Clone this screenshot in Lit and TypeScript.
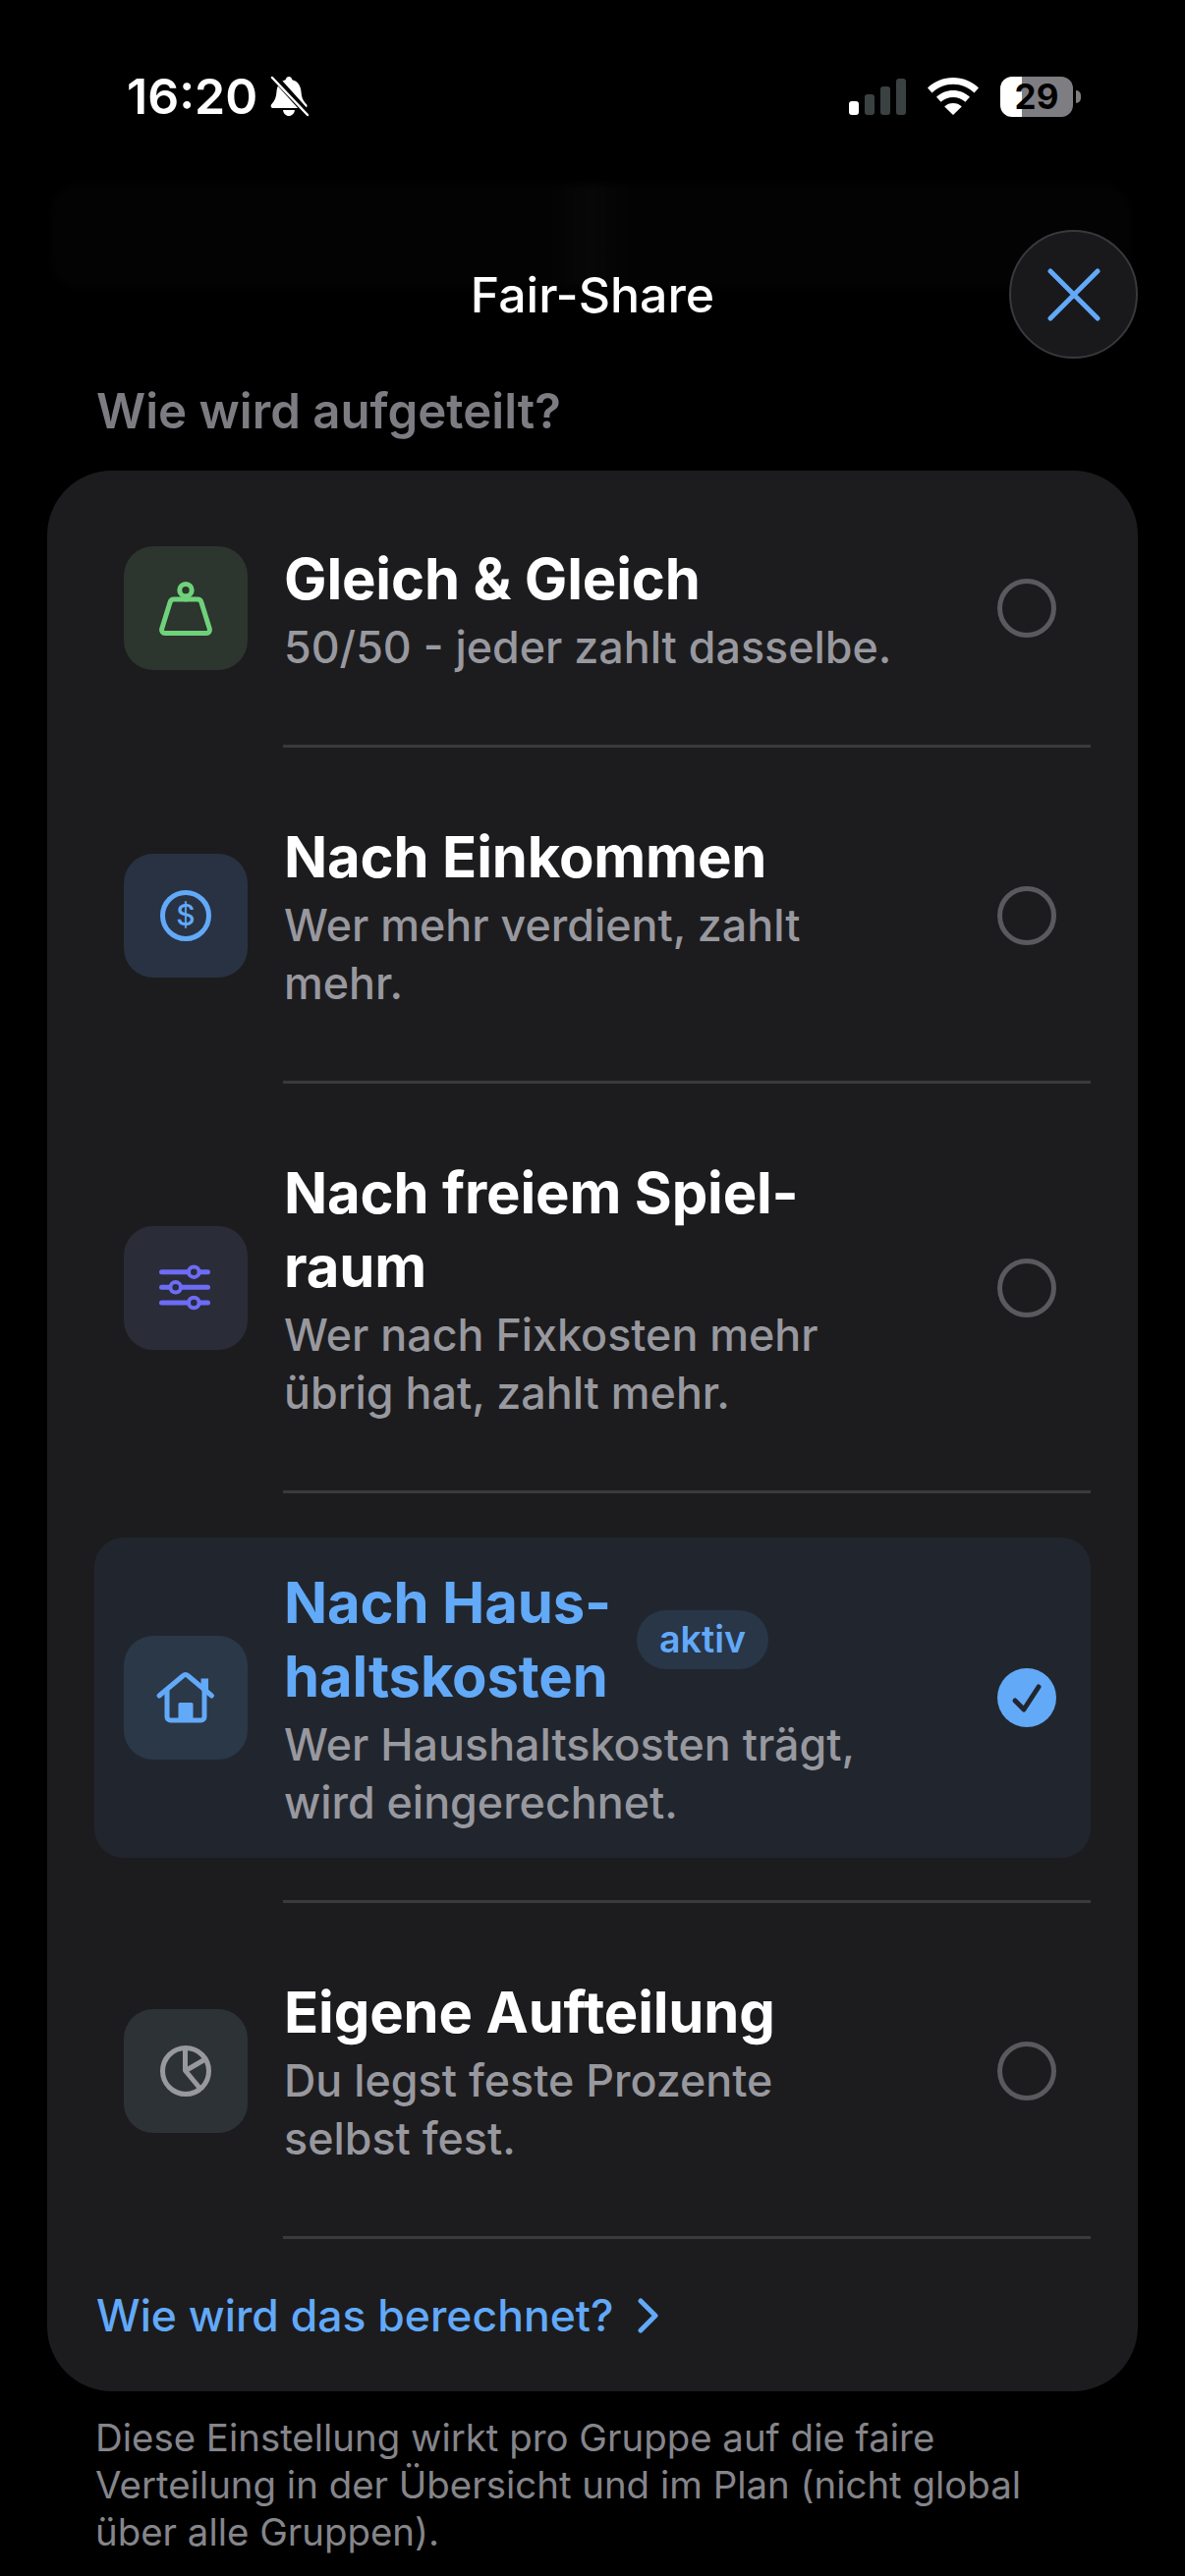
import { LitElement, html, svg, css, nothing } from 'lit';
import { customElement } from 'lit/decorators.js';
import { classMap } from 'lit/directives/class-map.js';

const weightIcon = svg`
  <circle cx="63" cy="44.7" r="6.2" />
  <path d="M63 51v3" />
  <path d="M51 54h24a4 4 0 0 1 3.900 3l8.400 27a3.500 3.500 0 0 1-3.400 4.600H42.100a3.500 3.500 0 0 1-3.400-4.600l8.400-27a4 4 0 0 1 3.900-3z" />
`;

const dollarIcon = svg`
  <circle cx="63" cy="63" r="23.5" />
  <text x="63" y="73" text-anchor="middle" class="glyph">$</text>
`;

const slidersIcon = svg`
  <path d="M38.500 46.700h47M38.500 62.300h47M38.500 78h47" />
  <circle class="knob" cx="71.300" cy="46.700" r="5.300" />
  <circle class="knob" cx="52.700" cy="62.300" r="5.300" />
  <circle class="knob" cx="71.300" cy="78" r="5.300" />
`;

const houseIcon = svg`
  <path d="M36 61 60.500 40.500a3.400 3.400 0 0 1 4.600 0L89.500 61" />
  <path d="M44 56v26.500a3.500 3.500 0 0 0 3.500 3.500h31a3.500 3.500 0 0 0 3.500-3.500V56" />
  <path d="M82.300 43.500V55" stroke-width="7.500" stroke-linecap="butt" />
  <path class="solid" d="M57 68h12a1.500 1.500 0 0 1 1.500 1.500V87h-15V69.500a1.500 1.500 0 0 1 1.500-1.500z" />
`;

const pieIcon = svg`
  <circle cx="63" cy="63" r="23.5" />
  <path d="M62.500 41v21.500L77 80M64 62l18-10.500" stroke-linecap="butt" />
`;

interface Plan {
  title: string;
  sub: string;
  tone: string;
  icon: unknown;
  active?: boolean;
}

const plans: Plan[] = [
  { title: 'Gleich & Gleich', sub: '50/50 - jeder zahlt dasselbe.', tone: 'green', icon: weightIcon },
  { title: 'Nach Einkommen', sub: 'Wer mehr verdient, zahlt\nmehr.', tone: 'blue', icon: dollarIcon },
  { title: 'Nach freiem Spiel-\nraum', sub: 'Wer nach Fixkosten mehr\nübrig hat, zahlt mehr.', tone: 'purple', icon: slidersIcon },
  { title: 'Nach Haus-\nhaltskosten', sub: 'Wer Haushaltskosten trägt,\nwird eingerechnet.', tone: 'home', icon: houseIcon, active: true },
  { title: 'Eigene Aufteilung', sub: 'Du legst feste Prozente\nselbst fest.', tone: 'gray', icon: pieIcon },
];

@customElement('app-root')
export class AppRoot extends LitElement {
  static styles = css`
    :host {
      display: block;
      position: relative;
      width: 1206px;
      height: 2622px;
      overflow: hidden;
      background: #000;
      color: #fff;
      font-family: Inter, 'Liberation Sans', sans-serif;
    }

    /* blurred content behind the sheet, barely visible */
    .ghost {
      position: absolute;
      left: 52px;
      top: 187px;
      width: 1098px;
      height: 106px;
      border-radius: 30px;
      background: linear-gradient(90deg, #030303 0 46%, #070707 50%, #030303 54%);
      filter: blur(3px);
    }

    /* ===== Status bar ===== */
    .status {
      position: relative;
      box-sizing: border-box;
      height: 234px;
      padding: 71px 114px 0 129px;
      display: flex;
      justify-content: space-between;
      align-items: flex-start;
    }
    .status-left,
    .status-right {
      display: flex;
      align-items: center;
      height: 54px;
    }
    .status-left { gap: 12px; }
    .time {
      font-size: 50px;
      font-weight: 600;
      line-height: 54px;
    }
    .bell { width: 40px; height: 42px; }
    .signal { width: 58px; height: 37px; margin-right: 22px; }
    .wifi { width: 52px; height: 38px; margin-right: 22px; }
    .battery {
      position: relative;
      width: 74px;
      height: 41px;
      border-radius: 12px;
      background: linear-gradient(90deg, #fff 0 22px, #7e7e82 22px);
      color: #000;
      font-size: 35px;
      font-weight: 700;
      line-height: 41px;
      text-align: center;
    }
    .battery::after {
      content: '';
      position: absolute;
      left: 77px;
      top: 14px;
      width: 5px;
      height: 13px;
      border-radius: 0 6px 6px 0;
      background: #7e7e82;
    }

    /* ===== Header ===== */
    .header {
      position: relative;
      display: grid;
      grid-template-columns: 131px 1fr 131px;
      align-items: center;
      padding: 0 48px;
    }
    .title {
      grid-column: 2;
      text-align: center;
      font-size: 50px;
      font-weight: 500;
    }
    .close {
      grid-column: 3;
      box-sizing: border-box;
      width: 131px;
      height: 131px;
      border-radius: 50%;
      background: #19191b;
      border: 2px solid #38393c;
      display: flex;
      align-items: center;
      justify-content: center;
    }
    .close svg { width: 54px; height: 54px; }

    .section {
      margin: 24px 0 32px 98px;
      font-size: 49.2px;
      font-weight: 600;
      line-height: 58px;
      color: #7c7c82;
    }

    /* ===== Card ===== */
    .card {
      display: flow-root;
      margin: 0 48px;
      border-radius: 66px;
      background: #1c1c1e;
    }
    .row {
      display: grid;
      grid-template-columns: 126px 1fr 60px;
      column-gap: 37px;
      align-items: center;
      margin: 44px 48px 43px 48px;
      padding: 29px 35px 29px 30px;
      border-radius: 30px;
    }
    .row + .sep + .row { margin-top: 45px; }
    .row--active { background: #21262e; }
    .sep {
      height: 3px;
      margin: 0 48px 0 240px;
      background: #3a3a3c;
    }
    .tile {
      width: 126px;
      height: 126px;
      border-radius: 30px;
    }
    .tile svg {
      display: block;
      width: 126px;
      height: 126px;
      fill: none;
      stroke: currentColor;
      stroke-width: 5;
      stroke-linecap: round;
      stroke-linejoin: round;
    }
    .tile .glyph {
      fill: currentColor;
      stroke: none;
      font-size: 30px;
      font-weight: 500;
    }
    .tile .knob { fill: var(--tile); stroke-width: 4; }
    .tile .solid { fill: currentColor; stroke: none; }
    .green { --tile: #2c352e; background: #2c352e; color: #6fd27a; }
    .blue { --tile: #283242; background: #283242; color: #62a9f8; }
    .purple { --tile: #2a2c38; background: #2a2c38; color: #6d6cf6; }
    .home { --tile: #2a3848; background: #2a3848; color: #62a9f8; }
    .gray { --tile: #2d3236; background: #2d3236; color: #98989f; }

    .heading {
      display: flex;
      align-items: center;
      gap: 26px;
    }
    .name {
      font-size: 58px;
      font-weight: 700;
      line-height: 75px;
      letter-spacing: -0.15px;
      white-space: pre-line;
    }
    .row--active .name { color: #62a9f8; }
    .badge {
      padding: 0 23px;
      height: 60px;
      border-radius: 30px;
      background: #283648;
      color: #62a9f8;
      font-size: 37.5px;
      font-weight: 600;
      line-height: 60px;
    }
    .sub {
      margin: 3px 0 -3px;
      font-size: 44.8px;
      font-weight: 500;
      line-height: 59px;
      color: #98989f;
      white-space: pre-line;
    }
    .radio {
      box-sizing: border-box;
      width: 60px;
      height: 60px;
      border-radius: 50%;
      border: 5px solid #5a5a5e;
    }
    .radio--on {
      border: none;
      background: #62a9f8;
    }
    .radio svg { display: block; width: 60px; height: 60px; }

    .link {
      display: flex;
      align-items: center;
      gap: 24px;
      height: 155px;
      padding-left: 50px;
      font-size: 44.5px;
      font-weight: 500;
      color: #62a9f8;
    }
    .link svg { width: 24px; height: 36px; }

    .note {
      margin: 23px 98px 0 97px;
      font-size: 38.4px;
      line-height: 48px;
      color: #85858b;
      white-space: pre-line;
    }
  `;

  private renderStatus() {
    return html`
      <div class="status">
        <div class="status-left">
          <span class="time">16:20</span>
          <svg class="bell" viewBox="0 0 40 42">
            <path fill="#fff" d="M20 1c2 0 3 1.500 3.400 3.200 5.600 1.300 8.600 6 9.100 12 .3 5 1.500 9 5.500 13 1.200 1.500.3 3.800-1.800 3.800H4c-2.100 0-3-2.300-1.800-3.800 3.500-3.500 5-7.500 5.300-13 .4-6 3.500-10.700 9.100-12C17 2.500 18 1 20 1zM14 35h12c-.4 3.500-3 6-6 6s-5.600-2.500-6-6z" />
            <path stroke="#000" stroke-width="7" d="M3-1 41 41" />
            <path stroke="#fff" stroke-width="2.500" stroke-linecap="round" d="M3 2l36 38" />
          </svg>
        </div>
        <div class="status-right">
          <svg class="signal" viewBox="0 0 58 37">
            <rect x="0" y="23" width="10" height="14" rx="3" fill="#fff" />
            <rect x="16" y="16" width="10" height="21" rx="3" fill="#3b4141" />
            <rect x="32" y="8" width="10" height="29" rx="3" fill="#3b4141" />
            <rect x="48" y="0" width="10" height="37" rx="3" fill="#3b4141" />
          </svg>
          <svg class="wifi" viewBox="0 0 52 38">
            <path fill="#fff" d="M26 0c10 0 19 3.800 26 10.500l-4.500 5C41.500 9.800 34 6.800 26 6.800S10.500 9.800 4.500 15.500L0 10.500C7 3.800 16 0 26 0z" />
            <path fill="#fff" d="M26 13c6.500 0 12.500 2.500 17 6.800l-4.600 5C35 21.700 30.600 20 26 20s-9 1.700-12.400 4.800L9 19.800C13.500 15.500 19.500 13 26 13z" />
            <path fill="#fff" d="M26 26c3.300 0 6.400 1.200 8.800 3.400L26 38l-8.800-8.600C19.600 27.200 22.700 26 26 26z" />
          </svg>
          <div class="battery">29</div>
        </div>
      </div>
    `;
  }

  private renderPlan(plan: Plan, index: number) {
    return html`
      ${index > 0 ? html`<div class="sep"></div>` : nothing}
      <div class=${classMap({ row: true, 'row--active': !!plan.active })}>
        <div class="tile ${plan.tone}">
          <svg viewBox="0 0 126 126">${plan.icon}</svg>
        </div>
        <div>
          <div class="heading">
            <span class="name">${plan.title}</span>
            ${plan.active ? html`<span class="badge">aktiv</span>` : nothing}
          </div>
          <div class="sub">${plan.sub}</div>
        </div>
        ${plan.active
          ? html`<div class="radio radio--on">
              <svg viewBox="0 0 60 60" fill="none" stroke="#21262e" stroke-width="5" stroke-linecap="round" stroke-linejoin="round">
                <path d="M18 33l9 9 15-23" />
              </svg>
            </div>`
          : html`<div class="radio"></div>`}
      </div>
    `;
  }

  render() {
    return html`
      <div class="ghost"></div>
      ${this.renderStatus()}
      <div class="header">
        <div class="title">Fair-Share</div>
        <div class="close">
          <svg viewBox="0 0 54 54" fill="none" stroke="#62a9f8" stroke-width="5" stroke-linecap="round">
            <path d="M3 3l48 48M51 3 3 51" />
          </svg>
        </div>
      </div>
      <div class="section">Wie wird aufgeteilt?</div>
      <div class="card">
        ${plans.map((plan, i) => this.renderPlan(plan, i))}
        <div class="sep"></div>
        <div class="link">
          <span>Wie wird das berechnet?</span>
          <svg viewBox="0 0 24 36" fill="none" stroke="#62a9f8" stroke-width="5" stroke-linecap="round" stroke-linejoin="round">
            <path d="M4 3l15 15L4 33" />
          </svg>
        </div>
      </div>
      <div class="note">Diese Einstellung wirkt pro Gruppe auf die faire
Verteilung in der Übersicht und im Plan (nicht global
über alle Gruppen).</div>
    `;
  }
}

declare global {
  interface HTMLElementTagNameMap {
    'app-root': AppRoot;
  }
}
